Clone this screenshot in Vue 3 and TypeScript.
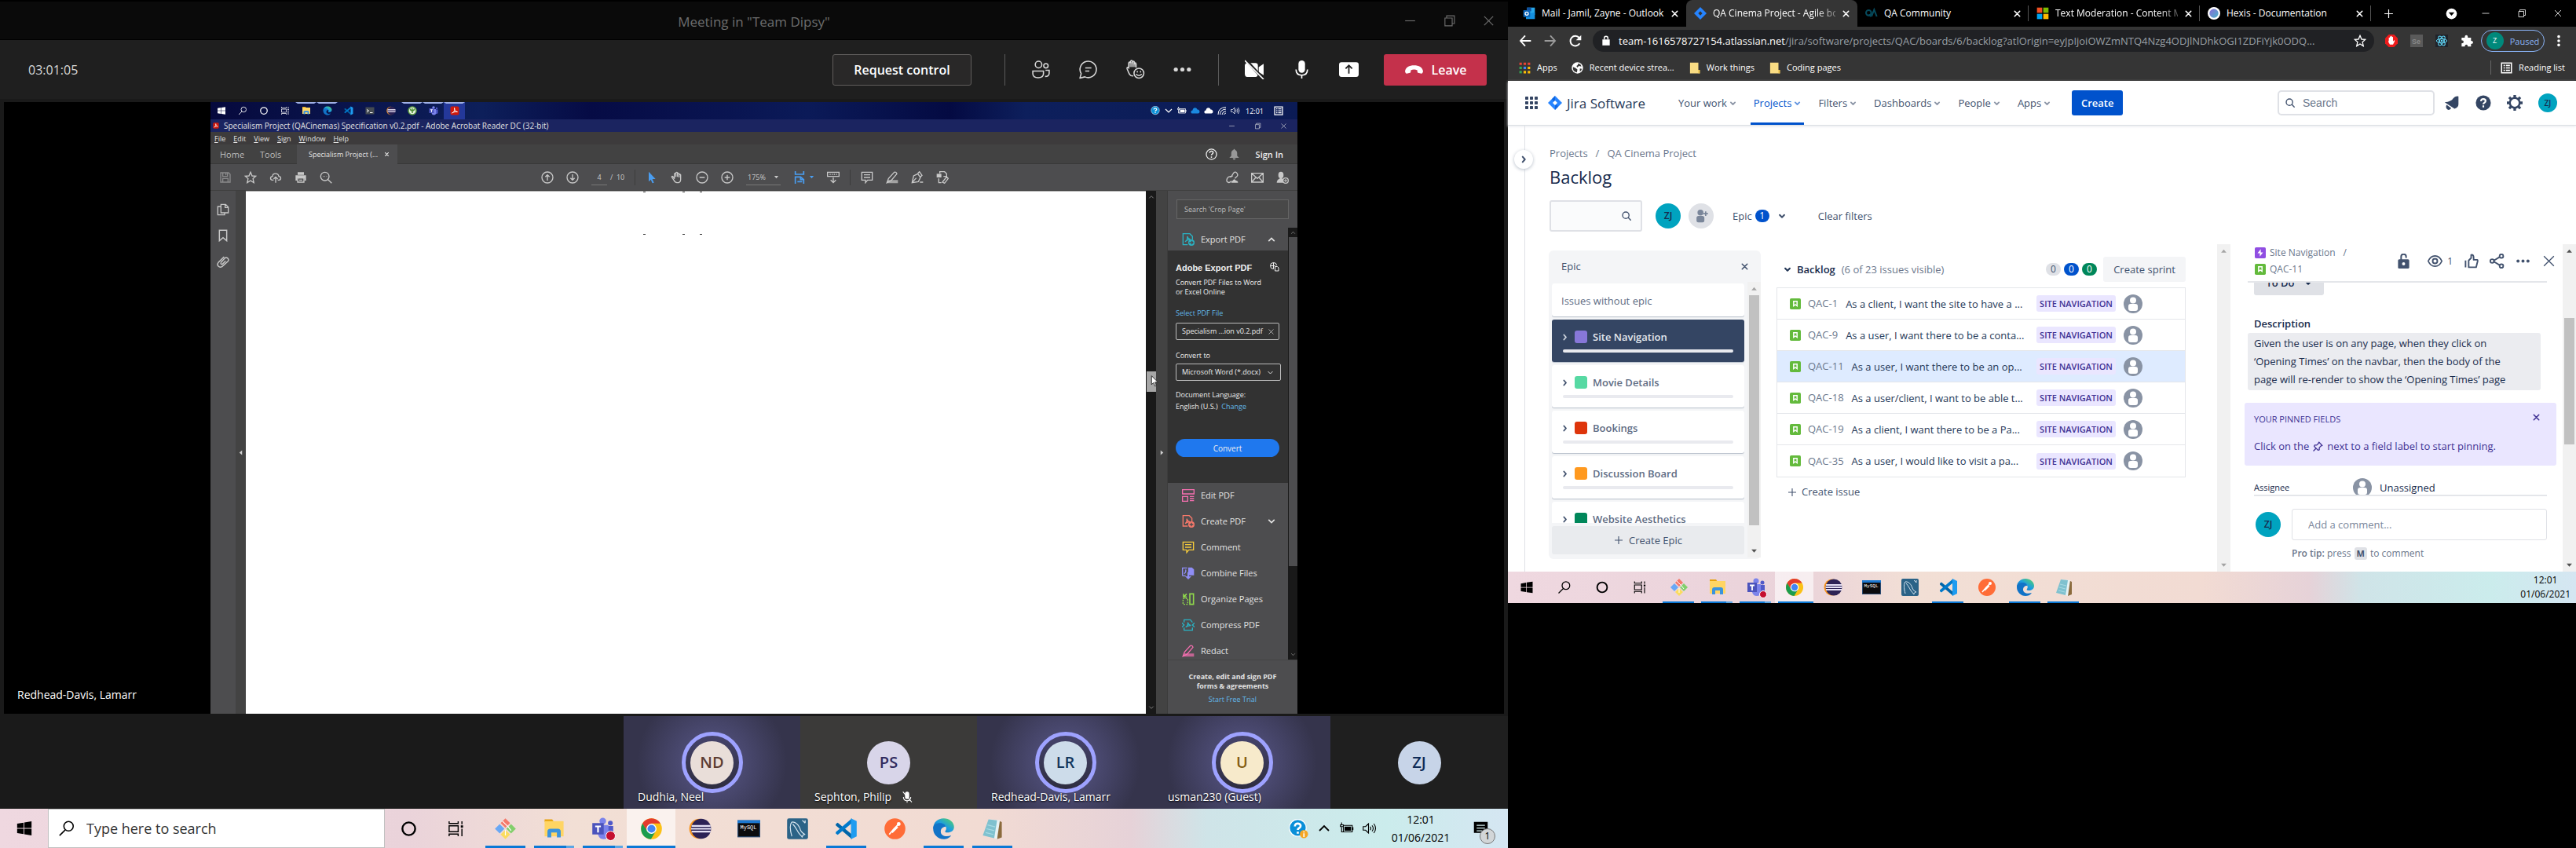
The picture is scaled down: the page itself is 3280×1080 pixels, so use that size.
<script setup lang="ts">
interface App { icon: string; running?: boolean; active?: boolean; stacked?: boolean }
interface Epic { name: string; color: string; selected?: boolean }
interface Issue { key: string; summary: string; selected?: boolean }

const apps: App[] = [
  { icon: 'git', running: true },
  { icon: 'explorer', running: true, stacked: true },
  { icon: 'teams', running: true, stacked: true },
  { icon: 'chrome', running: true, active: true },
  { icon: 'eclipse' },
  { icon: 'mysql' },
  { icon: 'workbench' },
  { icon: 'vscode', running: true },
  { icon: 'postman' },
  { icon: 'edge', running: true },
  { icon: 'notepad', running: true },
]

const sharedApps = ['start', 'search', 'cortana', 'taskview', 'explorer', 'edge', 'vscode', 'terminal', 'eclipse', 'spring', 'teams', 'acrobat']
const sharedOpen = ['explorer', 'edge', 'spring', 'teams', 'acrobat']
const menus = ['File', 'Edit', 'View', 'Sign', 'Window', 'Help']

const tools = [
  { name: 'Edit PDF', icon: 'editpdf', color: '#f56fb0' },
  { name: 'Create PDF', icon: 'createpdf', color: '#f8796b', more: true },
  { name: 'Comment', icon: 'note', color: '#f5cb3c' },
  { name: 'Combine Files', icon: 'combine', color: '#8f8df5' },
  { name: 'Organize Pages', icon: 'organize', color: '#90d94c' },
  { name: 'Compress PDF', icon: 'compress', color: '#2ab3c4' },
  { name: 'Redact', icon: 'marker', color: '#f56fb0' },
]

const people = [
  { initials: 'ND', name: 'Dudhia, Neel', bg: '#e9ded9', fg: '#5c3d33', live: true },
  { initials: 'PS', name: 'Sephton, Philip', bg: '#d8d5e9', fg: '#312b5e', muted: true },
  { initials: 'LR', name: 'Redhead-Davis, Lamarr', bg: '#cddcea', fg: '#12365c', live: true },
  { initials: 'U', name: 'usman230 (Guest)', bg: '#f7eacb', fg: '#835c12', live: true },
  { initials: 'ZJ', name: '', bg: '#c7d4e8', fg: '#0f2c57', self: true },
]

const tabs = [
  { title: 'Mail - Jamil, Zayne - Outlook', icon: 'outlook' },
  { title: 'QA Cinema Project - Agile bo', icon: 'jira', active: true, long: true },
  { title: 'QA Community', icon: 'qa' },
  { title: 'Text Moderation - Content M', icon: 'microsoft', long: true },
  { title: 'Hexis - Documentation', icon: 'hexis' },
]

const nav = ['Your work', 'Projects', 'Filters', 'Dashboards', 'People', 'Apps']

const epics: Epic[] = [
  { name: 'Site Navigation', color: '#8777d9', selected: true },
  { name: 'Movie Details', color: '#57d9a3' },
  { name: 'Bookings', color: '#de350b' },
  { name: 'Discussion Board', color: '#ff991f' },
  { name: 'Website Aesthetics', color: '#00875a' },
]

const issues: Issue[] = [
  { key: 'QAC-1', summary: 'As a client, I want the site to have a ...' },
  { key: 'QAC-9', summary: 'As a user, I want there to be a conta...' },
  { key: 'QAC-11', summary: 'As a user, I want there to be an op...', selected: true },
  { key: 'QAC-18', summary: 'As a user/client, I want to be able t...' },
  { key: 'QAC-19', summary: 'As a client, I want there to be a Pa...' },
  { key: 'QAC-35', summary: 'As a user, I would like to visit a pa...' },
]
</script>

<template>
  <svg class="sprite" aria-hidden="true">
    <defs>
      <linearGradient id="edgeg" x1="0" y1="1" x2="1" y2="0"><stop offset="0" stop-color="#0c59a4" /><stop offset=".5" stop-color="#1b9de2" /><stop offset="1" stop-color="#5bd75b" /></linearGradient>
      <linearGradient id="hexg" x1="0" y1="0" x2="1" y2="1"><stop offset="0" stop-color="#8a6bd8" /><stop offset="1" stop-color="#48b4c8" /></linearGradient>
    </defs>
    <symbol id="start" viewBox="0 0 24 24"><path fill="currentColor" d="M2 5.5 11 4v7.5H2zM12 3.8 22 2.3v9.2H12zM2 12.5h9V20l-9-1.5zM12 12.5h10v9.2l-10-1.5z" /></symbol>
    <symbol id="search" viewBox="0 0 24 24"><g fill="none" stroke="currentColor" stroke-width="1.7"><circle cx="14.5" cy="9" r="6.5" /><path d="M10 14 2 22" /></g></symbol>
    <symbol id="lens" viewBox="0 0 24 24"><g fill="none" stroke="currentColor" stroke-width="2.4" stroke-linecap="round"><circle cx="10.500" cy="10.500" r="7" /><path d="m16 16 5 5" /></g></symbol>
    <symbol id="cortana" viewBox="0 0 24 24"><circle cx="12" cy="12" r="8.500" fill="none" stroke="currentColor" stroke-width="2.500" /></symbol>
    <symbol id="taskview" viewBox="0 0 24 24"><g fill="none" stroke="currentColor" stroke-width="1.500"><path d="M3 2v3h12V2M3 22v-3h12v3M3 8h12v8H3zM20 2v4M20 12v10" /><path stroke-width="3" d="M20 7.500v3" /></g></symbol>
    <symbol id="git" viewBox="0 0 24 24"><path fill="#f4796b" d="m12 1 5 5-5 5-5-5z" /><path fill="#69a8f5" d="m6 7 5 5-5 5-5-5z" /><path fill="#82cf6b" d="m18 7 5 5-5 5-5-5z" /><path fill="#fbdc5f" d="m12 13 5 5-5 5-5-5z" /><path stroke="#fff" stroke-width="1" fill="none" d="m9 4 6 6M12 13v6M15 10l3 4" /></symbol>
    <symbol id="explorer" viewBox="0 0 24 24"><path fill="#e8a30e" d="M2 2h8l2 3H2z" /><path fill="#ffd563" d="M2 4h20v16H2z" /><path fill="#3b93dd" d="M5 21v-6q0-3 3-3h8q3 0 3 3v6h-4v-5H9v5z" /></symbol>
    <symbol id="teams" viewBox="0 0 24 24"><circle cx="12" cy="4" r="3.500" fill="#7b83eb" /><circle cx="20" cy="6" r="2.500" fill="#5059c9" /><path fill="#5059c9" d="M15 9h8v8q0 3-4 3h-4z" /><path fill="#7b83eb" d="M7 8h11v10q0 5-5 5t-6-5z" /><path fill="#4b53bc" d="M1 6h12v12H1z" /><path stroke="#fff" stroke-width="1.800" d="M4 9.500h6M7 9.500V16" /></symbol>
    <symbol id="chrome" viewBox="0 0 24 24"><circle cx="12" cy="12" r="11" fill="#fbc116" /><path fill="#e33b2e" d="M2.500 6.500A11 11 0 0 1 21.500 6.500H12L7 14z" /><path fill="#1a9c4f" d="M2.500 6.500A11 11 0 0 0 11.500 23l5-8.500-9 0z" /><circle cx="12" cy="12" r="5.300" fill="#fff" /><circle cx="12" cy="12" r="4.200" fill="#4285f4" /></symbol>
    <symbol id="eclipse" viewBox="0 0 24 24"><circle cx="11" cy="12" r="10.500" fill="#f7941e" /><circle cx="13" cy="12" r="10.500" fill="#2c2255" /><path stroke="#e5e1f5" stroke-width="1.800" d="M3 9h20M2.500 12h21M3 15h20" /></symbol>
    <symbol id="mysql" viewBox="0 0 24 24"><path fill="#2a4a70" d="M0 3h24v18H0z" /><path fill="#0b0b0d" d="M1 6h22v14H1z" /><path fill="#1c78d0" d="M0 3h24v3H0z" /></symbol>
    <symbol id="workbench" viewBox="0 0 24 24"><rect x="1" y="1" width="22" height="22" rx="2" fill="#2b6387" /><path fill="none" stroke="#d8e6f0" stroke-width="1" d="M6 20C4 13 4 7 6 5c4-1 8 4 9 8 1 3 3 4 5 5-2 0-3 1-3 3-1-2-3-3-4-5-2-3-3-6-6-9M17 3l3 3M20 3v3" /></symbol>
    <symbol id="vscode" viewBox="0 0 24 24"><path fill="#0065a9" d="m1 7 2-1.500L18 18v5L1 8.500z" /><path fill="#007acc" d="m1 17 2 1.500L18 6V1L1 15.500z" /><path fill="#1f9cf0" d="m17 1 6 3v16l-6 3z" /></symbol>
    <symbol id="postman" viewBox="0 0 24 24"><circle cx="12" cy="12" r="11" fill="#ff6c37" /><path fill="none" stroke="#fff" stroke-width="1.500" d="M6 18l5-6 4-4M9 16l6-6" /><circle cx="16" cy="7" r="2" fill="#fff" /></symbol>
    <symbol id="edge" viewBox="0 0 24 24"><path fill="url(#edgeg)" d="M1 12C1 5 6 1 12 1s11 4 11 9c0 4-3 6-7 6-2 0-3-1-2-2 2-3 0-6-4-6-5 0-9 4-9 4z" /><path fill="#1173c7" d="M1 12c0-4 4-6 7-6 4 0 6 2 6 4-3 0-5 2-5 5 0 4 5 6 11 4-2 3-5 4-8 4C6 23 1 18 1 12z" /></symbol>
    <symbol id="notepad" viewBox="0 0 24 24"><path fill="#8a6a3c" d="m18 3 4 2v16l-5 2z" /><path fill="#e7f2f4" d="m8 2 12 1-3 20-3-1z" /><path fill="#7fc1cf" d="M8 2 17 3l-3 19-12-3z" /><path stroke="#a8dbe4" stroke-width="1" d="m7 8 8 2M6 12l8 2M5 16l8 2" /></symbol>
    <symbol id="terminal" viewBox="0 0 24 24"><path fill="#444b52" d="M1 3h22v18H1z" /><path fill="none" stroke="#fff" stroke-width="2" d="m4 9 5 3-5 4M12 17h7" /></symbol>
    <symbol id="spring" viewBox="0 0 24 24"><circle cx="12" cy="12" r="10" fill="#e6f2df" stroke="#5d9c45" stroke-width="3" /><path fill="none" stroke="#4c8c33" stroke-width="3" d="M12 6v12M7 7c0 4 2 5 5 5s5-1 5-5" /></symbol>
    <symbol id="acrobat" viewBox="0 0 24 24"><rect x="1" y="1" width="22" height="22" rx="4" fill="#d0190b" /><path fill="none" stroke="#fff" stroke-width="2" d="M5 18c5-2 8-8 6-13 0 6 3 9 8 10-5-1-9 0-14 3z" /></symbol>
    <symbol id="min" viewBox="0 0 24 24"><path stroke="currentColor" stroke-width="1.600" d="M3 12h18" /></symbol>
    <symbol id="restore" viewBox="0 0 24 24"><path fill="none" stroke="currentColor" stroke-width="1.600" d="M4 7h13v14H4zM7 7V3h14v14h-4" /></symbol>
    <symbol id="close" viewBox="0 0 24 24"><path stroke="currentColor" stroke-width="1.700" d="m4 4 16 16M20 4 4 20" /></symbol>
    <symbol id="cross" viewBox="0 0 24 24"><path stroke="currentColor" stroke-width="3.500" stroke-linecap="round" d="m5 5 14 14M19 5 5 19" /></symbol>
    <symbol id="people" viewBox="0 0 24 24"><g fill="none" stroke="currentColor" stroke-width="1.500"><circle cx="9" cy="6" r="4" /><circle cx="18" cy="7.500" r="2.700" /><path d="M2 14h13v3q0 5-6.500 5T2 17zM17.500 13H22v3.500q0 4-5 4" /></g></symbol>
    <symbol id="chat" viewBox="0 0 24 24"><path fill="none" stroke="currentColor" stroke-width="1.500" stroke-linejoin="round" d="M2 22.500 3.500 17A10 10 0 1 1 8 21zM8.500 10h7.500M8.500 14h5" /></symbol>
    <symbol id="hand" viewBox="0 0 24 24"><g fill="none" stroke="currentColor" stroke-width="1.500" stroke-linecap="round"><path d="M9 20c-4 0-5-4-7-9-.5-2 1-2 2-1V4q1.200-2 2.300 0V2q1.200-2 2.300 0v1q1.200-2 2.400 0v2q1.300-1 2 0v4" /><circle cx="16.500" cy="16.500" r="6" /><path d="M13.500 18q3 3 6 0M14.500 14.500v.5M18.500 14.500v.5" /></g><path fill="currentColor" opacity=".65" d="M5 3h8v6H5z" /></symbol>
    <symbol id="dots" viewBox="0 0 24 24"><g fill="currentColor"><circle cx="4" cy="12" r="2.500" /><circle cx="12" cy="12" r="2.500" /><circle cx="20" cy="12" r="2.500" /></g></symbol>
    <symbol id="camoff" viewBox="0 0 24 24"><path fill="currentColor" d="M4 4h9q3 0 3 3v10q0 4-3 4H3q-3 0-3-4V7q0-2 2-3zM17 9l6-4v14l-6-4z" /><path stroke="#1f1f1f" stroke-width="3.500" d="m1 0 22 24" /><path stroke="currentColor" stroke-width="1.600" d="m0 1 23 23" /></symbol>
    <symbol id="mic" viewBox="0 0 24 24"><rect x="8" y="1" width="8" height="15" rx="4" fill="currentColor" /><path fill="none" stroke="currentColor" stroke-width="1.600" d="M5 12q0 7 7 7t7-7M12 19v4" /></symbol>
    <symbol id="micoff" viewBox="0 0 24 24"><rect x="8" y="2" width="8" height="14" rx="4" fill="currentColor" /><path fill="none" stroke="currentColor" stroke-width="1.600" d="M5 12q0 7 7 7t7-7M12 19v4M4 2l17 20" /></symbol>
    <symbol id="share" viewBox="0 0 24 24"><rect x="0" y="3" width="24" height="18" rx="3" fill="currentColor" /><path fill="none" stroke="#1f1f1f" stroke-width="1.700" d="M12 17V7M8 11l4-4 4 4" /></symbol>
    <symbol id="hang" viewBox="0 0 24 12"><path fill="currentColor" d="M1 8C2 3 6 1 12 1s10 2 11 7c0 2-1 3-2 3l-4-1c-1 0-1-1-1-3q-4-2-8 0c0 2 0 3-1 3l-4 1c-1 0-2-1-2-3z" /></symbol>
    <symbol id="up" viewBox="0 0 24 24"><path fill="none" stroke="currentColor" stroke-width="2.400" d="m4 16 8-8 8 8" /></symbol>
    <symbol id="down" viewBox="0 0 24 24"><path fill="none" stroke="currentColor" stroke-width="2.400" d="m4 8 8 8 8-8" /></symbol>
    <symbol id="upbold" viewBox="0 0 24 24"><path fill="none" stroke="currentColor" stroke-width="4" d="m3 17 9-9 9 9" /></symbol>
    <symbol id="downbold" viewBox="0 0 24 24"><path fill="none" stroke="currentColor" stroke-width="4" d="m3 7 9 9 9-9" /></symbol>
    <symbol id="chev" viewBox="0 0 24 24"><path fill="none" stroke="currentColor" stroke-width="5" stroke-linecap="round" stroke-linejoin="round" d="m5 9 7 7 7-7" /></symbol>
    <symbol id="chevr" viewBox="0 0 24 24"><path fill="none" stroke="currentColor" stroke-width="5" stroke-linecap="round" stroke-linejoin="round" d="m9 4 7 8-7 8" /></symbol>
    <symbol id="tri" viewBox="0 0 24 24"><path fill="currentColor" d="M3 7h18l-9 11z" /></symbol>
    <symbol id="triup" viewBox="0 0 24 24"><path fill="currentColor" d="M3 18h18L12 7z" /></symbol>
    <symbol id="trir" viewBox="0 0 24 24"><path fill="currentColor" d="M6 2v20l12-10z" /></symbol>
    <symbol id="tril" viewBox="0 0 24 24"><path fill="currentColor" d="M18 2v20L6 12z" /></symbol>
    <symbol id="save" viewBox="0 0 24 24"><path fill="none" stroke="currentColor" stroke-width="2" d="M3 3h15l3 3v15H3zM7 3v7h9V3M7 21v-7h10v7M13 4v4" /></symbol>
    <symbol id="star" viewBox="0 0 24 24"><path fill="none" stroke="currentColor" stroke-width="2" d="m12 2 3 7 7 .6-5.300 4.700L18.300 22 12 18l-6.300 4 1.600-7.700L2 9.600 9 9z" /></symbol>
    <symbol id="cloud" viewBox="0 0 24 24"><path fill="none" stroke="currentColor" stroke-width="2" d="M8 17H6c-5 0-5-7 0-7 0-7 11-7 12 0 5 0 5 7 0 7h-2M12 22V11M8 15l4-4 4 4" /></symbol>
    <symbol id="print" viewBox="0 0 24 24"><path fill="currentColor" d="M6 2h12v5H6zM2 8h20v10h-3v-4H5v4H2z" /><path fill="none" stroke="currentColor" stroke-width="2" d="M6 13h12v8H6zM9 17h6" /></symbol>
    <symbol id="find" viewBox="0 0 24 24"><path fill="none" stroke="currentColor" stroke-width="2" d="M10 2a8 8 0 1 0 0 16 8 8 0 0 0 0-16zM16 16l7 7M6 10h1M9.500 10h1M13 10h1" /></symbol>
    <symbol id="circup" viewBox="0 0 24 24"><path fill="none" stroke="currentColor" stroke-width="2" d="M12 1.500a10.500 10.500 0 1 0 0 21 10.500 10.500 0 0 0 0-21zM12 18V7M8 11l4-4 4 4" /></symbol>
    <symbol id="circdown" viewBox="0 0 24 24"><path fill="none" stroke="currentColor" stroke-width="2" d="M12 1.500a10.500 10.500 0 1 0 0 21 10.500 10.500 0 0 0 0-21zM12 6v11M8 13l4 4 4-4" /></symbol>
    <symbol id="zoomout" viewBox="0 0 24 24"><path fill="none" stroke="currentColor" stroke-width="2" d="M12 1.500a10.500 10.500 0 1 0 0 21 10.500 10.500 0 0 0 0-21zM7 12h10" /></symbol>
    <symbol id="zoomin" viewBox="0 0 24 24"><path fill="none" stroke="currentColor" stroke-width="2" d="M12 1.500a10.500 10.500 0 1 0 0 21 10.500 10.500 0 0 0 0-21zM7 12h10M12 7v10" /></symbol>
    <symbol id="pointer" viewBox="0 0 24 24"><path fill="currentColor" d="M6 1v19l4-4 3 7 3-1-3-7h6z" /></symbol>
    <symbol id="grab" viewBox="0 0 24 24"><path fill="none" stroke="currentColor" stroke-width="2" stroke-linejoin="round" d="M7 14V5q1.500-2 3 0V3q1.500-2 3 0v2q1.500-2 3 0v2q1.500-2 3 0v9q0 6-7 6-4 0-6-5l-4-6q0-2 2-1zM10 5v6M13 5v6M16 6v6" /></symbol>
    <symbol id="fit" viewBox="0 0 24 24"><path fill="none" stroke="currentColor" stroke-width="2.500" d="M4 0v6h16V0M4 24V11h10l6 5v8M14 11v5h6M8 20h9" /></symbol>
    <symbol id="scrollmode" viewBox="0 0 24 24"><path fill="none" stroke="currentColor" stroke-width="2" d="M1 2h22v8H1zM5 6h2M9 6h2M13 6h2M17 6h2M12 12v10M7 17l5 5 5-5" /></symbol>
    <symbol id="note" viewBox="0 0 24 24"><path fill="none" stroke="currentColor" stroke-width="2" d="M2 2h20v15H13l-4 5v-5H2zM6 7h12M6 12h12" /></symbol>
    <symbol id="marker" viewBox="0 0 24 24"><path fill="currentColor" d="M1 23 4 17h19v6z" opacity=".7" /><path fill="none" stroke="currentColor" stroke-width="2" d="M2 22 5 14 16 2q4-1 5 3L10 18z" /></symbol>
    <symbol id="sign" viewBox="0 0 24 24"><path fill="none" stroke="currentColor" stroke-width="2" d="M2 22 5 9l8-4 5 7-4 8zM13 4l3-3 5 7-3 3M2 22l8-9M17 21h6" /></symbol>
    <symbol id="more" viewBox="0 0 24 24"><path fill="currentColor" d="M1 5h9v7H1z" /><path fill="none" stroke="currentColor" stroke-width="2" d="M7 4V1h9l4 4v5h-6M5 14v8h5M12 21l8-10 3 3-7 9z" /></symbol>
    <symbol id="link" viewBox="0 0 24 24"><path fill="none" stroke="currentColor" stroke-width="2" d="M9 12 15 3q3-3 6 1t-1 7l-3 3M13 9l-8 2q-5 4-3 9 4 4 8-1" /><path fill="currentColor" d="M10 22q0-4 3-4 3-5 6 0 4 0 4 4z" /></symbol>
    <symbol id="mail" viewBox="0 0 24 24"><path fill="none" stroke="currentColor" stroke-width="2" d="M1 4h22v17H1zM1 4l11 10L23 4M1 21l8-9M23 21l-8-9" /></symbol>
    <symbol id="adduser" viewBox="0 0 24 24"><path fill="currentColor" d="M9 1q5 0 5 6t-3 6v1l4 2v6H1q0-5 6-8v-1Q4 13 4 7t5-6z" /><circle cx="18" cy="18" r="5" fill="#4d4d4f" stroke="currentColor" stroke-width="2" /><path stroke="currentColor" stroke-width="1.500" d="M15 18h6M18 15v6" /></symbol>
    <symbol id="help" viewBox="0 0 24 24"><circle cx="12" cy="12" r="10.500" fill="none" stroke="currentColor" stroke-width="2" /><path fill="none" stroke="currentColor" stroke-width="2.400" d="M8.500 9c0-5 7-4 7-.5 0 3-3.500 2.500-3.500 5.500M12 16.500V19" /></symbol>
    <symbol id="helpfill" viewBox="0 0 24 24"><circle cx="12" cy="12" r="11.500" fill="currentColor" /><path fill="none" stroke="#fff" stroke-width="2.600" d="M8.500 9.500c0-5 7-4 7-.5 0 3-3.500 2.500-3.500 5M12 16v3" /></symbol>
    <symbol id="bell" viewBox="0 0 24 24"><path fill="currentColor" d="M12 1q1.500 0 1.500 2Q18 4 18 10v5l4 4H2l4-4v-5q0-6 4.500-7 0-2 1.500-2zM9 20h6q0 3-3 3t-3-3z" /></symbol>
    <symbol id="pages" viewBox="0 0 24 24"><path fill="none" stroke="currentColor" stroke-width="2" d="M8 2h9l5 5v11H8zM16 2v6h6M8 6H2v16h13v-4" /></symbol>
    <symbol id="bookmark" viewBox="0 0 24 24"><path fill="none" stroke="currentColor" stroke-width="2.200" d="M5 2h14v20l-7-6-7 6z" /></symbol>
    <symbol id="clip" viewBox="0 0 24 24"><path fill="none" stroke="currentColor" stroke-width="2.200" d="m8 14 7-8q3-3 6 0t0 6L10 22q-4 2-7-1t0-7L14 3M8 14q-1 4 3 3l6-6" /></symbol>
    <symbol id="export" viewBox="0 0 24 24"><path fill="none" stroke="currentColor" stroke-width="2" d="M11 22H2V1h13l5 5v6M6 16c4-2 5-5 4-10 1 4 3 5 6 6-4 0-7 1-10 4z" /><circle cx="18" cy="18" r="6" fill="currentColor" /><path fill="none" stroke="#4d4d4f" stroke-width="2" d="M14 18h7M18 15l3 3-3 3" /></symbol>
    <symbol id="createpdf" viewBox="0 0 24 24"><path fill="none" stroke="currentColor" stroke-width="2" d="M11 21H2V1h12l5 5v6M6 16c4-2 4-5 3-9 1 3 3 5 6 6-4 0-6 1-9 3z" /><circle cx="18" cy="18" r="6" fill="currentColor" /><path fill="none" stroke="#4d4d4f" stroke-width="2" d="M14.500 18h7M18 14.500v7" /></symbol>
    <symbol id="editpdf" viewBox="0 0 24 24"><path fill="none" stroke="currentColor" stroke-width="2" d="M1 1h22v8H1zM1 14h10v9H1zM15 14h8M15 18h8M15 22h8" /></symbol>
    <symbol id="combine" viewBox="0 0 24 24"><path fill="currentColor" d="M12 1h7l4 4v11H12z" /><path fill="none" stroke="currentColor" stroke-width="2" d="M1 17V2h9M4 13c3-2 4-4 3-8M1 17h6" /><path stroke="currentColor" stroke-width="3" d="M12 10v10" /><path fill="currentColor" d="M6 18h12l-6 6z" /></symbol>
    <symbol id="organize" viewBox="0 0 24 24"><path fill="none" stroke="currentColor" stroke-width="2.400" d="M15 2h7v20h-7z" /><path fill="none" stroke="currentColor" stroke-width="2" stroke-dasharray="3 2" d="M2 11h9v11H2z" /><path fill="none" stroke="currentColor" stroke-width="2.400" d="M3 2v6h6M3 8l6-6" /></symbol>
    <symbol id="compress" viewBox="0 0 24 24"><path fill="none" stroke="currentColor" stroke-width="2" d="M4 7V2h12l4 5M4 17v5h16v-5M0 8l4 4-4 4M24 8l-4 4 4 4M7 16c4-2 5-4 4-9 1 3 3 5 6 6-4 0-7 1-10 3z" /></symbol>
    <symbol id="globe" viewBox="0 0 24 24"><path fill="none" stroke="currentColor" stroke-width="2" d="M9 1a8 8 0 1 0 0 16M9 1v16M1 9h12M9 1q8 0 8 7M13 11h6l3 3v8h-9z" /></symbol>
    <symbol id="badgehelp" viewBox="0 0 24 24"><circle cx="12" cy="11" r="10.500" fill="#0a8fd8" stroke="#fff" stroke-width="1" /><path fill="none" stroke="#fff" stroke-width="2.600" d="M8.500 9c0-5 7-4 7-.5 0 3-3.500 2.500-3.500 5M12 15.500V18" /></symbol>
    <symbol id="helpinfo" viewBox="0 0 24 24"><circle cx="11" cy="11" r="10.300" fill="#0a8fd8" stroke="#fff" stroke-width="1.200" /><path fill="none" stroke="#fff" stroke-width="2.600" d="M7.500 9c0-5 7-4 7-.5 0 3-3.500 2.500-3.500 5M11 15.500V18" /><circle cx="18.500" cy="18.500" r="5" fill="#f5a623" /><path stroke="#fff" stroke-width="1.600" d="M18.500 15v1.500M18.500 17.500V22" /></symbol>
    <symbol id="battery" viewBox="0 0 24 24"><path fill="none" stroke="currentColor" stroke-width="1.500" d="M6 7h15v11H6zM3 2v4M1 6h5v3H1zM3 10v8h3" /><path fill="currentColor" d="M8 9h11v7H8zM21 10h2v5h-2z" /></symbol>
    <symbol id="sound" viewBox="0 0 24 24"><path fill="none" stroke="currentColor" stroke-width="1.500" d="M1 9h4l5-5v16l-5-5H1zM13 9q2 3 0 6M16 7q4 5 0 10M19 4q6 8 0 16" /></symbol>
    <symbol id="wifi" viewBox="0 0 24 24"><path fill="none" stroke="currentColor" stroke-width="2" d="M2 22Q2 4 22 3M7 22Q7 9 22 8M12 22q1-8 10-9M17 22q1-3 5-4" /></symbol>
    <symbol id="onedrive" viewBox="0 0 24 24"><path fill="currentColor" d="M5 19c-6 0-5-8 0-8C6 3 15 3 17 9c7-1 8 10 2 10z" /></symbol>
    <symbol id="notif" viewBox="0 0 24 24"><path fill="currentColor" d="M2 2h20v16h-5v5l-5-5H2z" /><path stroke="#d4edee" stroke-width="1.700" d="M6 7h12M6 11h12M6 15h8" /></symbol>
    <symbol id="outlook" viewBox="0 0 24 24"><path fill="#28a8ea" d="M8 1h15v14H8z" /><path fill="#0f4f9e" d="M8 1h8v7H8z" /><path fill="#1490df" d="M6 13l17-3v13H6z" /><path fill="#0a64b8" d="M1 6h13v13H1z" /><circle cx="7.500" cy="12.500" r="3" fill="none" stroke="#fff" stroke-width="2" /></symbol>
    <symbol id="jira" viewBox="0 0 24 24"><path fill="#2684ff" d="m12 0 12 12-12 12L0 12z" /><path fill="#0052cc" d="m12 0-5 5q0 3 5 5zM12 24l5-5q0-3-5-5z" opacity=".6" /><path fill="#fff" d="m12 8 4 4-4 4-4-4z" /></symbol>
    <symbol id="jiratab" viewBox="0 0 24 24"><path fill="#2684ff" d="m12 0 12 12-12 12L0 12z" /><path fill="#353535" d="m12 8 4 4-4 4-4-4z" /></symbol>
    <symbol id="qa" viewBox="0 0 24 24"><g fill="none" stroke="#064a5c" stroke-width="3"><circle cx="6.500" cy="11" r="5" /><path d="m7 14 4 4M12 18l5-13 5 13" /></g></symbol>
    <symbol id="microsoft" viewBox="0 0 24 24"><path fill="#f25022" d="M1 1h10v10H1z" /><path fill="#7fba00" d="M13 1h10v10H13z" /><path fill="#00a4ef" d="M1 13h10v10H1z" /><path fill="#ffb900" d="M13 13h10v10H13z" /></symbol>
    <symbol id="hexis" viewBox="0 0 24 24"><circle cx="12" cy="12" r="12" fill="#fff" /><circle cx="12" cy="12" r="8.500" fill="url(#hexg)" /></symbol>
    <symbol id="plus" viewBox="0 0 24 24"><path stroke="currentColor" stroke-width="2.200" d="M12 2v20M2 12h20" /></symbol>
    <symbol id="media" viewBox="0 0 24 24"><circle cx="12" cy="12" r="11" fill="currentColor" /><path fill="#000" d="M6 9h12l-6 7z" /></symbol>
    <symbol id="back" viewBox="0 0 24 24"><path fill="none" stroke="currentColor" stroke-width="2.800" d="M23 12H3M12 2 3 12l9 10" /></symbol>
    <symbol id="fwd" viewBox="0 0 24 24"><path fill="none" stroke="currentColor" stroke-width="2.800" d="M1 12h20M12 2l9 10-9 10" /></symbol>
    <symbol id="reload" viewBox="0 0 24 24"><path fill="none" stroke="currentColor" stroke-width="3" d="M20 17A9.500 9.500 0 1 1 19 6" /><path fill="currentColor" d="M23 1v10H13z" /></symbol>
    <symbol id="lock" viewBox="0 0 24 24"><path fill="currentColor" d="M4 9h16v13H4z" /><path fill="none" stroke="currentColor" stroke-width="2.500" d="M8 9V6q0-4 4-4t4 4v3" /></symbol>
    <symbol id="unlock" viewBox="0 0 24 24"><rect x="3" y="9" width="18" height="15" rx="2" fill="currentColor" /><path fill="none" stroke="currentColor" stroke-width="2.500" d="M8 10V5q0-4 4-4t4 4v2" /><circle cx="12" cy="16.500" r="2.500" fill="#fff" /></symbol>
    <symbol id="adblock" viewBox="0 0 24 24"><path fill="#ed1c1c" d="M7 0h10l7 7v10l-7 7H7l-7-7V7z" /><path fill="#fff" d="M7 11V6q1-1 2 0v4-6q1-1 2 0v6-7q1-1 2 0v8-6q1-1 2 0v8l2-2q2 0 1 2l-3 6H9l-3-5z" /></symbol>
    <symbol id="react" viewBox="0 0 24 24"><path fill="#20232a" d="M0 0h24v24H0z" /><g fill="none" stroke="#61dafb" stroke-width="1.500"><ellipse cx="12" cy="12" rx="10" ry="4" /><ellipse cx="12" cy="12" rx="10" ry="4" transform="rotate(60 12 12)" /><ellipse cx="12" cy="12" rx="10" ry="4" transform="rotate(120 12 12)" /></g><circle cx="12" cy="12" r="2" fill="#61dafb" /></symbol>
    <symbol id="puzzle" viewBox="0 0 24 24"><path fill="currentColor" d="M2 6h6q0-5 3-5t3 5h6v6q4 0 4 3t-4 3v5h-6q0-4-3-4t-3 4H2v-6q4 0 4-3t-4-3z" /></symbol>
    <symbol id="vdots" viewBox="0 0 24 24"><g fill="currentColor"><circle cx="12" cy="4" r="2.700" /><circle cx="12" cy="12" r="2.700" /><circle cx="12" cy="20" r="2.700" /></g></symbol>
    <symbol id="appsgrid" viewBox="0 0 24 24"><path fill="#e94335" d="M1 1h5v5H1zM9.500 1h5v5h-5zM18 1h5v5h-5z" /><path fill="#34a853" d="M1 9.500h5v5H1z" /><path fill="#4285f4" d="M9.500 9.500h5v5h-5z" /><path fill="#fbbc05" d="M18 9.500h5v5h-5z" /><path fill="#34a853" d="M1 18h5v5H1z" /><path fill="#fbbc05" d="M9.500 18h5v5h-5zM18 18h5v5h-5z" /></symbol>
    <symbol id="world" viewBox="0 0 24 24"><circle cx="12" cy="12" r="11.500" fill="#fff" /><path fill="#353535" d="M13 3q6 0 7 6l-5-1-3 3-2-3 3-2zM3 10l5 2 4 3-1 6Q4 20 3 14zM17 13l4 1q-1 4-4 5z" /></symbol>
    <symbol id="folder" viewBox="0 0 24 24"><path fill="#f9dc83" d="M3 1h17v15h3v7H3z" /><path fill="#e8bf45" d="M20 16h3v7h-3z" /></symbol>
    <symbol id="reading" viewBox="0 0 24 24"><path fill="none" stroke="currentColor" stroke-width="2.500" d="M2 2h20v20H2z" /><path stroke="currentColor" stroke-width="2.500" d="M6 7h3M11 7h8M6 12h3M11 12h8M6 17h3M11 17h8" /></symbol>
    <symbol id="ninegrid" viewBox="0 0 24 24"><g fill="currentColor"><rect width="6" height="6" rx="1" /><rect x="9" width="6" height="6" rx="1" /><rect x="18" width="6" height="6" rx="1" /><rect y="9" width="6" height="6" rx="1" /><rect x="9" y="9" width="6" height="6" rx="1" /><rect x="18" y="9" width="6" height="6" rx="1" /><rect y="18" width="6" height="6" rx="1" /><rect x="9" y="18" width="6" height="6" rx="1" /><rect x="18" y="18" width="6" height="6" rx="1" /></g></symbol>
    <symbol id="news" viewBox="0 0 24 24"><path fill="currentColor" d="M22 2v12q0 5-6 7L1 11q10-1 13-6 3-4 8-3zM4 15l7 5q-4 5-7 1-2-3 0-6z" /></symbol>
    <symbol id="gear" viewBox="0 0 24 24"><circle cx="12" cy="12" r="7.500" fill="none" stroke="currentColor" stroke-width="3" /><path stroke="currentColor" stroke-width="4" d="M12 0v4M12 20v4M0 12h4M20 12h4M3.500 3.500l3 3M17.500 17.500l3 3M3.500 20.500l3-3M17.500 6.500l3-3" /></symbol>
    <symbol id="person" viewBox="0 0 24 24"><circle cx="12" cy="12" r="12" fill="#8993a4" /><circle cx="12" cy="7.500" r="4" fill="#fff" /><rect x="6" y="12" width="12" height="9" rx="3" fill="#fff" /></symbol>
    <symbol id="addperson" viewBox="0 0 24 24"><circle cx="11" cy="7" r="4.500" fill="currentColor" /><rect x="5" y="12" width="12" height="10" rx="3" fill="currentColor" /><path stroke="currentColor" stroke-width="2" d="M19 5v7M15.500 8.500h7" /></symbol>
    <symbol id="story" viewBox="0 0 24 24"><rect width="24" height="24" rx="3" fill="#63ba3c" /><path fill="#fff" d="M7 5h10v14l-5-4-5 4z" /><path fill="#63ba3c" d="M9.500 7.500h5V14L12 12l-2.500 2z" /></symbol>
    <symbol id="epic" viewBox="0 0 24 24"><rect width="24" height="24" rx="3" fill="#904ee2" /><path fill="#fff" d="m13 4-7 9h5v7l7-9h-5z" /></symbol>
    <symbol id="eye" viewBox="0 0 24 24"><path fill="none" stroke="currentColor" stroke-width="2.200" d="M1 12q4-8.500 11-8.500T23 12q-4 8.500-11 8.500T1 12z" /><circle cx="12" cy="12" r="3.800" fill="none" stroke="currentColor" stroke-width="2.400" /></symbol>
    <symbol id="thumb" viewBox="0 0 24 24"><path fill="none" stroke="currentColor" stroke-width="2.400" stroke-linejoin="round" d="M8 21V11l4-4V2q4-1 4 5v3h6q1 1 0 4l-2 8H8zM3 11v11" /></symbol>
    <symbol id="nodes" viewBox="0 0 24 24"><g fill="none" stroke="currentColor" stroke-width="2.400"><circle cx="4" cy="12" r="3" /><circle cx="19" cy="4" r="3" /><circle cx="19" cy="20" r="3" /><path d="m7 11 9-5.500M7 13l9 5.500" /></g></symbol>
    <symbol id="pin" viewBox="0 0 24 24"><path fill="none" stroke="currentColor" stroke-width="2.400" stroke-linejoin="round" d="m14 2 8 8-3 1-4 4v5l-3 1-9-9 1-3h5l4-4zM7 17l-6 6" /></symbol>
    <symbol id="cursor" viewBox="0 0 16 24"><path fill="#fff" stroke="#222" stroke-width="1.500" d="M2 1v18l4-4 3 7 3-1-3-7h6z" /></symbol>
  </svg>

  <div class="desktop">
    <!-- Primary monitor: Teams call -->
    <section class="primary">
      <header class="titlebar">
        <h1 class="title">Meeting in "Team Dipsy"</h1>
        <div class="winbtns">
          <button aria-label="Minimize"><svg><use href="#min" /></svg></button>
          <button aria-label="Restore"><svg><use href="#restore" /></svg></button>
          <button aria-label="Close"><svg><use href="#close" /></svg></button>
        </div>
      </header>
      <div class="callbar">
        <time class="timer">03:01:05</time>
        <button class="request">Request control</button>
        <div class="group">
          <button aria-label="People"><svg><use href="#people" /></svg></button>
          <button aria-label="Chat"><svg><use href="#chat" /></svg></button>
          <button aria-label="Reactions"><svg><use href="#hand" /></svg></button>
          <button aria-label="More"><svg><use href="#dots" /></svg></button>
        </div>
        <div class="group devices">
          <button aria-label="Camera"><svg><use href="#camoff" /></svg></button>
          <button aria-label="Microphone"><svg><use href="#mic" /></svg></button>
          <button aria-label="Share"><svg><use href="#share" /></svg></button>
        </div>
        <button class="leave"><svg><use href="#hang" /></svg>Leave</button>
      </div>

      <div class="stage">
        <div class="shared">
          <div class="s-taskbar">
            <span v-for="a in sharedApps" :key="a" class="s-app" :class="{ open: sharedOpen.includes(a), front: a === 'acrobat' }"><svg><use :href="'#' + a" /></svg></span>
            <div class="s-tray">
              <svg><use href="#badgehelp" /></svg><svg><use href="#down" /></svg><svg><use href="#battery" /></svg>
              <svg class="blue"><use href="#onedrive" /></svg><svg><use href="#onedrive" /></svg><svg><use href="#wifi" /></svg><svg><use href="#sound" /></svg>
              <span class="s-time">12:01</span>
              <svg><use href="#reading" /></svg>
            </div>
          </div>
          <div class="s-title">
            <svg><use href="#acrobat" /></svg>
            <span>Specialism Project (QACinemas) Specification v0.2.pdf - Adobe Acrobat Reader DC (32-bit)</span>
            <div class="s-win"><svg><use href="#min" /></svg><svg><use href="#restore" /></svg><svg><use href="#close" /></svg></div>
          </div>
          <nav class="s-menu"><span v-for="m in menus" :key="m"><u>{{ m[0] }}</u>{{ m.slice(1) }}</span></nav>
          <div class="s-tabs">
            <span class="s-home">Home</span><span class="s-tools">Tools</span>
            <div class="s-tab">Specialism Project (... <svg><use href="#cross" /></svg></div>
            <div class="s-account"><svg><use href="#help" /></svg><svg class="dim"><use href="#bell" /></svg><b>Sign In</b></div>
          </div>
          <div class="s-toolbar">
            <svg class="dim"><use href="#save" /></svg><svg><use href="#star" /></svg><svg><use href="#cloud" /></svg><svg><use href="#print" /></svg><svg><use href="#find" /></svg>
            <div class="s-mid">
              <svg><use href="#circup" /></svg><svg><use href="#circdown" /></svg>
              <span class="s-field page">4</span><span class="of">/&nbsp; 10</span><i class="bar"></i>
              <svg class="hot"><use href="#pointer" /></svg><svg><use href="#grab" /></svg><svg><use href="#zoomout" /></svg><svg><use href="#zoomin" /></svg>
              <span class="s-field zoom">175%<svg class="xs"><use href="#tri" /></svg></span>
              <span class="fit hot"><svg><use href="#fit" /></svg><svg class="xs"><use href="#tri" /></svg></span>
              <svg><use href="#scrollmode" /></svg><i class="bar"></i>
              <svg><use href="#note" /></svg><svg><use href="#marker" /></svg><svg><use href="#sign" /></svg><svg><use href="#more" /></svg>
            </div>
            <div class="s-end"><svg><use href="#link" /></svg><svg><use href="#mail" /></svg><svg><use href="#adduser" /></svg></div>
          </div>
          <div class="s-body">
            <aside class="s-rail"><svg><use href="#pages" /></svg><svg><use href="#bookmark" /></svg><svg><use href="#clip" /></svg></aside>
            <div class="gutter"><svg><use href="#tril" /></svg></div>
            <div class="page-area"><div class="marks"><i></i><i></i><i></i></div><div class="marks low"><i></i><i></i><i></i></div></div>
            <div class="s-scroll">
              <svg><use href="#up" /></svg><div class="s-thumb"><svg class="cursor"><use href="#cursor" /></svg></div><svg><use href="#down" /></svg>
            </div>
            <div class="gutter right"><svg><use href="#trir" /></svg></div>
            <aside class="panel">
              <div class="p-search"><input type="text" aria-label="Search tools" placeholder="Search 'Crop Page'" /></div>
              <div class="p-middle">
                <div class="p-list">
                  <div class="p-head"><svg class="teal"><use href="#export" /></svg><span>Export PDF</span><svg class="caret"><use href="#upbold" /></svg></div>
                  <div class="p-export">
                    <div class="p-name">Adobe Export PDF<svg><use href="#globe" /></svg></div>
                    <p>Convert PDF Files to Word<br />or Excel Online</p>
                    <a href="#">Select PDF File</a>
                    <button class="p-file">Specialism ...ion v0.2.pdf<svg><use href="#close" /></svg></button>
                    <label for="fmt">Convert to</label>
                    <div class="p-select"><select id="fmt"><option>Microsoft Word (*.docx)</option></select><svg><use href="#down" /></svg></div>
                    <div class="p-lang">Document Language:<br />English (U.S.) &nbsp;<a href="#">Change</a></div>
                    <button class="convert">Convert</button>
                  </div>
                  <div v-for="t in tools" :key="t.name" class="p-tool"><svg :style="{ color: t.color }"><use :href="'#' + t.icon" /></svg><span>{{ t.name }}</span><svg v-if="t.more" class="caret"><use href="#downbold" /></svg></div>
                </div>
                <div class="p-bar"><svg><use href="#up" /></svg><i></i><svg><use href="#down" /></svg></div>
              </div>
              <div class="p-promo"><b>Create, edit and sign PDF<br />forms &amp; agreements</b><a href="#">Start Free Trial</a></div>
            </aside>
          </div>
        </div>
        <span class="presenter">Redhead-Davis, Lamarr</span>
      </div>

      <div class="strip">
        <div v-for="p in people" :key="p.initials" class="tile" :class="{ live: p.live, self: p.self }">
          <span class="halo"><span class="face" :style="{ background: p.bg, color: p.fg }">{{ p.initials }}</span></span>
          <span v-if="p.name" class="who">{{ p.name }}<svg v-if="p.muted"><use href="#micoff" /></svg></span>
        </div>
      </div>

      <footer class="taskbar">
        <button class="t-start" aria-label="Start"><svg><use href="#start" /></svg></button>
        <label class="t-search"><svg><use href="#search" /></svg><input type="text" aria-label="Search Windows" placeholder="Type here to search" /></label>
        <button class="t-sys" aria-label="Cortana"><svg><use href="#cortana" /></svg></button>
        <button class="t-sys" aria-label="Task view"><svg><use href="#taskview" /></svg></button>
        <div class="t-apps">
          <button v-for="a in apps" :key="a.icon" class="t-app" :class="{ running: a.running, active: a.active, stacked: a.stacked }" :aria-label="a.icon"><svg><use :href="'#' + a.icon" /></svg><i v-if="a.icon === 'teams'" class="rec"></i><span v-if="a.icon === 'mysql'" class="cmd">MySQL</span></button>
        </div>
        <div class="tray">
          <svg class="q"><use href="#helpinfo" /></svg><svg><use href="#up" /></svg><svg><use href="#battery" /></svg><svg><use href="#sound" /></svg>
          <div class="clock">12:01<br />01/06/2021</div>
          <span class="notif"><svg><use href="#notif" /></svg><i>1</i></span>
        </div>
      </footer>
    </section>

    <!-- Secondary monitor: browser -->
    <section class="secondary">
      <div class="tabstrip">
        <div v-for="t in tabs" :key="t.title" class="tab" :class="{ active: t.active, long: t.long }">
          <svg class="fav"><use :href="t.active ? '#jiratab' : '#' + t.icon" /></svg><span>{{ t.title }}</span><svg class="x"><use href="#cross" /></svg>
        </div>
        <button class="newtab" aria-label="New tab"><svg><use href="#plus" /></svg></button>
        <div class="bwin"><svg class="media"><use href="#media" /></svg><svg><use href="#min" /></svg><svg><use href="#restore" /></svg><svg><use href="#close" /></svg></div>
      </div>
      <div class="address">
        <svg><use href="#back" /></svg><svg class="off"><use href="#fwd" /></svg><svg><use href="#reload" /></svg>
        <div class="omni"><svg><use href="#lock" /></svg><span class="url"><b>team-1616578727154.atlassian.net</b>/jira/software/projects/QAC/boards/6/backlog?atlOrigin=eyJpIjoiOWZmNTQ4Nzg4ODJlNDhkOGI1ZDFiYjk0ODQ...</span><svg class="st"><use href="#star" /></svg></div>
        <svg><use href="#adblock" /></svg><span class="se">Se</span><svg><use href="#react" /></svg><svg><use href="#puzzle" /></svg>
        <button class="paused"><i>Z</i>Paused</button>
        <svg class="vd"><use href="#vdots" /></svg>
      </div>
      <div class="bookmarks">
        <a href="#"><svg><use href="#appsgrid" /></svg>Apps</a>
        <a href="#"><svg><use href="#world" /></svg>Recent device strea...</a>
        <a href="#"><svg><use href="#folder" /></svg>Work things</a>
        <a href="#"><svg><use href="#folder" /></svg>Coding pages</a>
        <a href="#" class="rl"><svg><use href="#reading" /></svg>Reading list</a>
      </div>

      <div class="jira">
        <header class="jnav">
          <svg class="grid"><use href="#ninegrid" /></svg>
          <svg class="logo"><use href="#jira" /></svg><span class="brand">Jira Software</span>
          <nav><a v-for="n in nav" :key="n" href="#" :class="{ on: n === 'Projects' }">{{ n }}<svg><use href="#chev" /></svg></a></nav>
          <button class="create">Create</button>
          <label class="jsearch"><svg><use href="#lens" /></svg><input type="text" aria-label="Search Jira" placeholder="Search" /></label>
          <div class="jicons"><svg><use href="#news" /></svg><svg><use href="#helpfill" /></svg><svg><use href="#gear" /></svg><span class="av small">ZJ</span></div>
        </header>
        <div class="jbody">
          <aside class="side"><button aria-label="Expand sidebar"><svg><use href="#chevr" /></svg></button></aside>
          <main class="board">
            <div class="crumbs"><a href="#">Projects</a><span>/</span><a href="#">QA Cinema Project</a></div>
            <h2>Backlog</h2>
            <div class="filters">
              <label class="fbox"><input type="text" aria-label="Search backlog" /><svg><use href="#lens" /></svg></label>
              <span class="av">ZJ</span><span class="av add"><svg><use href="#addperson" /></svg></span>
              <button class="fepic">Epic <i>1</i><svg><use href="#chev" /></svg></button>
              <button class="fclear">Clear filters</button>
            </div>
            <div class="columns">
              <section class="left">
                <div class="epics">
                  <div class="ehead">Epic<svg><use href="#cross" /></svg></div>
                  <div class="ewrap">
                    <div class="ecol">
                      <div class="elist">
                        <div class="ecard none">Issues without epic</div>
                        <div v-for="e in epics" :key="e.name" class="ecard" :class="{ sel: e.selected }">
                          <div class="erow"><svg><use href="#chevr" /></svg><i :style="{ background: e.color }"></i>{{ e.name }}</div>
                          <div class="ebar"></div>
                        </div>
                      </div>
                      <button class="ecreate"><svg><use href="#plus" /></svg>Create Epic</button>
                    </div>
                    <div class="wbar ebarr"><svg><use href="#triup" /></svg><i></i><svg class="dk"><use href="#tri" /></svg></div>
                  </div>
                </div>
                <div class="backlog">
                  <div class="bhead">
                    <svg><use href="#chev" /></svg><b>Backlog</b><span>(6 of 23 issues visible)</span>
                    <div class="counts"><i>0</i><i class="b">0</i><i class="g">0</i></div>
                    <button>Create sprint</button>
                  </div>
                  <ul class="issues">
                    <li v-for="s in issues" :key="s.key" :class="{ sel: s.selected }">
                      <svg class="story"><use href="#story" /></svg><a href="#">{{ s.key }}</a><span class="sum">{{ s.summary }}</span><em>SITE NAVIGATION</em><svg class="pic"><use href="#person" /></svg>
                    </li>
                  </ul>
                  <button class="cissue"><svg><use href="#plus" /></svg>Create issue</button>
                </div>
              </section>
              <div class="wbar mbar"><svg><use href="#triup" /></svg><svg><use href="#tri" /></svg></div>
              <aside class="detail">
                <div class="dhead">
                  <div class="dpath"><span><svg><use href="#epic" /></svg>Site Navigation<em>/</em></span><span><svg><use href="#story" /></svg>QAC-11</span></div>
                  <div class="dacts"><svg class="lk"><use href="#unlock" /></svg><svg><use href="#eye" /></svg><span>1</span><svg><use href="#thumb" /></svg><svg><use href="#nodes" /></svg><svg><use href="#dots" /></svg><svg><use href="#close" /></svg></div>
                </div>
                <div class="dscroll">
                  <button class="status">To Do <svg><use href="#chev" /></svg></button>
                  <h3>Description</h3>
                  <p class="desc">Given the user is on any page, when they click on<br />‘Opening Times’ on the navbar, then the body of the<br />page will re-render to show the ‘Opening Times’ page</p>
                  <div class="pinned">
                    <div class="ptitle">YOUR PINNED FIELDS<svg><use href="#cross" /></svg></div>
                    <p>Click on the <svg><use href="#pin" /></svg> next to a field label to start pinning.</p>
                  </div>
                  <div class="assignee"><b>Assignee</b><svg><use href="#person" /></svg><span>Unassigned</span></div>
                </div>
                <div class="comment"><span class="av">ZJ</span><input type="text" aria-label="Add a comment" placeholder="Add a comment..." /></div>
                <p class="tip"><b>Pro tip:</b> press <kbd>M</kbd> to comment</p>
              </aside>
              <div class="wbar dbar"><svg class="dk"><use href="#triup" /></svg><i></i><svg class="dk"><use href="#tri" /></svg></div>
            </div>
          </main>
        </div>
      </div>

      <footer class="taskbar mini">
        <button class="t-sys" aria-label="Start"><svg><use href="#start" /></svg></button>
        <button class="t-sys" aria-label="Search"><svg><use href="#search" /></svg></button>
        <button class="t-sys" aria-label="Cortana"><svg><use href="#cortana" /></svg></button>
        <button class="t-sys" aria-label="Task view"><svg><use href="#taskview" /></svg></button>
        <div class="t-apps">
          <button v-for="a in apps" :key="a.icon" class="t-app" :class="{ running: a.running, active: a.active, stacked: a.stacked }" :aria-label="a.icon"><svg><use :href="'#' + a.icon" /></svg><i v-if="a.icon === 'teams'" class="rec"></i><span v-if="a.icon === 'mysql'" class="cmd">MySQL</span></button>
        </div>
        <div class="clock">12:01<br />01/06/2021</div>
      </footer>
    </section>
  </div>
</template>

<style>
body { background: #000; }
</style>

<style scoped>
* { box-sizing: border-box; }
.sprite { position: absolute; width: 0; height: 0; }
.desktop { display: grid; grid-template-columns: 24fr 17fr; min-height: 100vh; background: #000; color: #fff; font-family: "Open Sans", "Noto Sans", sans-serif; line-height: 1; }
svg { width: 16px; height: 16px; flex: none; display: block; }
button { border: 0; background: none; padding: 0; color: inherit; font: inherit; display: flex; align-items: center; justify-content: center; }
input, select { border: 0; background: none; padding: 0; color: inherit; font: inherit; outline: 0; min-width: 0; }
a { color: inherit; text-decoration: none; }
i, em { font-style: normal; }
h1, h2, h3, p, ul { margin: 0; padding: 0; font-weight: 400; }
.primary { display: flex; flex-direction: column; min-width: 0; height: 100vh; background: #1a1a1a; }
.secondary { display: flex; flex-direction: column; min-width: 0; color: #42526e; }

/* Call window chrome */
.titlebar { height: 51px; border-top: 2px solid #000; border-bottom: 1px solid #000; background: #0a0a0a; display: grid; grid-template-columns: 1fr auto 1fr; align-items: center; color: #6d6d6d; }
.title { grid-column: 2; font-size: 17px; line-height: 24px; padding-top: 4px; }
.winbtns { display: flex; justify-content: flex-end; }
.winbtns button { width: 50px; height: 48px; }
.winbtns svg { width: 17px; height: 17px; }
.callbar { height: 75px; background: #1f1f1f; display: flex; align-items: center; padding: 0 27px 0 36px; }
.timer { font-size: 16px; color: #d6d6d6; }
.request { margin-left: auto; width: 177px; height: 40px; border: 1px solid #605e5c; border-radius: 3px; background: #292828; font-size: 16px; font-weight: 600; }
.group { display: flex; height: 40px; margin-left: 42px; padding-left: 15px; border-left: 1px solid #5a5a5a; color: #d8d8d8; }
.group button { width: 60px; }
.group svg { width: 25px; height: 25px; }
.group + .group { margin-left: 16px; }
.group.devices { color: #fff; }
.leave { margin-left: 15px; width: 131px; height: 40px; border-radius: 3px; background: #c4314b; font-size: 16px; font-weight: 600; gap: 10px; }
.leave svg { width: 25px; height: 13px; }
.stage { flex: 1; min-height: 0; margin: 4px 5px 3px; background: #000; display: flex; position: relative; }
.presenter { position: absolute; left: 17px; bottom: 14px; font-size: 14px; line-height: 20px; }

/* Shared screen */
.shared { flex: 1; min-width: 0; margin: 0 263px; display: flex; flex-direction: column; background: #4d4d4f; color: #e2e2e2; font-size: 10px; }
.s-taskbar { height: 22px; display: flex; background: linear-gradient(90deg, #06093d, #0d1f5a 25%, #060b45 35%, #0b1a58 55%, #040a42 68%, #0d1f5c 75%, #0b1b55); color: #fff; }
.s-app { width: 27px; display: flex; align-items: center; justify-content: center; }
.s-app svg { width: 12px; height: 12px; }
.s-app.open { border-top: 2px solid #9fb0e6; padding-bottom: 2px; border-left: 3px solid transparent; border-right: 3px solid transparent; }
.s-app.front { background: #24389a; border-color: #9fb0e6 transparent transparent; }
.s-tray { margin-left: auto; display: flex; align-items: center; gap: 5px; padding-right: 18px; font-size: 9px; }
.s-tray svg { width: 12px; height: 12px; }
.s-tray .blue { color: #1b8ae0; }
.s-time { padding: 0 8px 0 2px; }
.s-title { height: 16px; background: #1b2460; display: flex; align-items: center; gap: 6px; padding: 0 13px 0 3px; white-space: nowrap; }
.s-title svg { width: 9px; height: 9px; }
.s-title > svg { width: 8px; height: 12px; }
.s-win { margin-left: auto; display: flex; gap: 24px; }
.s-menu { height: 16px; background: #3d3b3c; display: flex; gap: 10px; align-items: center; padding-left: 5px; font-size: 9px; }
.s-tabs { height: 25px; background: #424242; border-bottom: 1px solid #383838; display: flex; align-items: center; font-size: 11px; color: #bdbdbd; }
.s-home { padding-left: 12px; width: 63px; }
.s-tools { width: 47px; }
.s-tab { width: 128px; height: 25px; padding-left: 15px; background: #4d4d4f; display: flex; align-items: center; gap: 8px; font-size: 9px; color: #e2e2e2; white-space: nowrap; }
.s-tab svg { width: 7px; height: 7px; }
.s-account { margin-left: auto; display: flex; align-items: center; gap: 14px; padding-right: 18px; color: #eee; }
.s-account svg { width: 15px; height: 15px; }
.s-account b { font-weight: 600; padding-left: 6px; }
.dim { opacity: .5; }
.s-toolbar { height: 34px; border-bottom: 1px solid #3f3f3f; display: flex; align-items: center; padding: 0 11px; gap: 16px; color: #c8c8c8; font-size: 9px; }
.s-toolbar svg { width: 16px; height: 16px; }
.s-mid { margin: 0 auto 0 250px; display: flex; align-items: center; gap: 16px; }
.s-toolbar .xs { width: 7px; height: 7px; }
.s-field { border-bottom: 1px solid #777; height: 20px; display: flex; align-items: center; justify-content: center; }
.page { width: 20px; }
.of { width: 18px; margin-left: -12px; white-space: nowrap; }
.zoom { width: 44px; gap: 10px; }
.fit { display: flex; align-items: center; gap: 4px; }
.hot { color: #4a9df0; }
.bar { width: 1px; height: 20px; margin: 0 -3px; background: #3c3c3c; }
.s-end { display: flex; gap: 16px; }
.s-body { flex: 1; min-height: 0; display: flex; }
.s-rail { width: 32px; display: flex; flex-direction: column; align-items: center; gap: 17px; padding-top: 16px; color: #c8c8c8; }
.gutter { width: 13px; background: #434343; display: flex; align-items: center; justify-content: center; color: #d0d0d0; }
.gutter svg { width: 7px; height: 9px; }
.gutter.right { width: 14px; }
.page-area { flex: 1; background: #fff; }
.marks { display: flex; padding-left: 506px; border-top: 1px solid #aaa; }
.marks i { width: 3px; height: 1px; background: #444; margin-right: 47px; }
.marks i + i { margin-right: 19px; }
.marks.low { border: 0; margin-top: 53px; }
.s-scroll { width: 13px; background: #191919; display: flex; flex-direction: column; align-items: center; justify-content: space-between; padding: 4px 0; color: #9a9a9a; }
.s-scroll > svg { width: 8px; height: 8px; }
.s-thumb { width: 12px; height: 26px; background: #a6a6a6; margin-bottom: 180px; position: relative; }
.cursor { position: absolute; left: 5px; top: 5px; width: 10px; height: 15px; }
.panel { width: 166px; display: flex; flex-direction: column; background: #4d4d4f; border-left: 1px solid #3c3c3c; font-size: 11px; }
.p-search { padding: 11px 11px; height: 47px; }
.p-search input { width: 100%; height: 25px; border: 1px solid #656565; padding-left: 9px; background: #484848; font-size: 9px; }
.p-search input::placeholder { color: #bdbdbd; opacity: 1; }
.p-middle { flex: 1; min-height: 0; display: flex; overflow: hidden; }
.p-list { flex: 1; min-width: 0; overflow: hidden; }
.p-head, .p-tool { height: 33px; display: flex; align-items: center; padding-left: 18px; gap: 8px; }
.p-head { height: 29px; }
.p-head span, .p-tool span { flex: 1; white-space: nowrap; }
.caret { width: 10px; height: 10px; margin-right: 16px; }
.teal { color: #2ab3c4; }
.p-export { height: 296px; background: #323232; background-clip: content-box; box-shadow: inset 0 0 0 200px #323232; padding: 15px 10px 0; font-size: 9px; line-height: 12px; margin-bottom: -1px; display: flex; flex-direction: column; align-items: flex-start; color: #eee; }
.p-export a { color: #62b8ea; }
.p-name { font: 700 11px/14px "Liberation Sans", sans-serif; width: 100%; display: flex; justify-content: space-between; padding-right: 1px; margin-bottom: 6px; white-space: nowrap; }
.p-name svg { width: 12px; height: 12px; }
.p-export p { margin-bottom: 15px; white-space: nowrap; }
.p-file { width: 132px; height: 22px; margin: 6px 0 14px; border: 1px solid #bbb; border-radius: 2px; justify-content: space-between; padding: 0 5px 0 7px; white-space: nowrap; }
.p-file svg { width: 9px; height: 9px; }
.p-export label { margin-bottom: 4px; }
.p-select { width: 134px; height: 22px; border: 1px solid #bbb; border-radius: 2px; padding: 0 8px 0 7px; display: flex; align-items: center; }
.p-select select { appearance: none; flex: 1; }
.p-select svg { width: 9px; height: 9px; }
.p-lang { line-height: 15px; margin-top: 10px; }
.convert { width: 132px; height: 23px; border-radius: 12px; background: #1f78ee; margin-top: 34px; font-size: 10px; }
.p-bar { width: 12px; background: #191919; display: flex; flex-direction: column; align-items: center; color: #999; padding: 3px 0; }
.p-bar svg { width: 7px; height: 7px; }
.p-bar i { width: 11px; height: 419px; margin: 2px 0 auto; background: #4d4d4f; }
.p-promo { height: 69px; text-align: center; padding-top: 15px; font-size: 9px; line-height: 12px; border-top: 1px solid #444; }
.p-promo a { display: block; color: #62b8ea; margin-top: 5px; }

/* Participants */
.strip { display: flex; justify-content: flex-end; height: 118px; }
.tile { width: 225px; background: #3b3a39; display: flex; align-items: center; justify-content: center; position: relative; }
.tile.live { background: radial-gradient(circle at 50% 50%, #5b598f 0, #4a4970 32%, #35344c 75%); }
.tile.self { width: 226px; background: #1f1f1f; }
.halo { width: 78px; height: 78px; border-radius: 50%; display: flex; align-items: center; justify-content: center; }
.live .halo { border: 5px solid #9ea2ff; background: linear-gradient(#45436b, #2e2d40); }
.face { width: 55px; height: 55px; border-radius: 50%; font-size: 20px; font-weight: 600; display: flex; align-items: center; justify-content: center; }
.who { position: absolute; left: 18px; bottom: 5px; font-size: 14px; line-height: 20px; display: flex; align-items: center; gap: 12px; text-shadow: 0 1px 2px #000; white-space: nowrap; }

/* Windows taskbar */
.taskbar { height: 50px; flex: none; display: flex; color: #000; background: linear-gradient(90deg, #efd8e0 0, #ead3da 27%, #f2dfd5 38%, #f2dbd3 65%, #e6d2d8 75%, #cfe4e8 80%, #cbecec 92%, #d5e6f2 100%); }
.t-start { width: 61px; }
.t-start svg { width: 22px; height: 22px; }
.t-search { width: 429px; border: 1px solid #c0c0c0; background: #fff; display: flex; align-items: center; gap: 14px; padding-left: 12px; font-size: 18px; }
.t-search svg { width: 22px; height: 22px; }
.t-search input { flex: 1; }
.t-search input::placeholder { color: #333; opacity: 1; }
.t-sys { width: 60px; }
.t-sys svg { width: 23px; height: 23px; }
.t-apps { display: flex; margin-left: 2px; }
.t-app { width: 62px; position: relative; }
.t-app svg { width: 29px; height: 29px; }
.t-app.active { background: rgba(255, 255, 255, .6); }
.t-app.running::after { content: ""; position: absolute; left: 6px; right: 5px; bottom: 0; height: 3px; background: #0a78d6; }
.t-app.active::after { left: 0; right: 0; }
.t-app.stacked::after { background: linear-gradient(90deg, #0a78d6 80%, #5ba6e4 80%); }
.cmd { position: absolute; left: 0; right: 0; top: 20px; text-align: center; color: #fff; font: 7px/8px "Liberation Mono", monospace; }
.rec { position: absolute; right: 14px; bottom: 9px; width: 13px; height: 13px; border-radius: 50%; background: #c50f2f; border: 1px solid #fff; }
.tray { margin-left: auto; display: flex; align-items: center; padding-right: 24px; gap: 11px; }
.tray svg { width: 18px; height: 18px; }
.tray .q { width: 25px; height: 25px; }
.clock { font-size: 14px; line-height: 23px; text-align: center; align-self: center; }
.tray .clock { width: 90px; }
.notif { position: relative; padding-left: 10px; }
.notif svg { width: 21px; height: 21px; }
.notif i { position: absolute; left: 19px; top: 10px; width: 20px; height: 20px; border-radius: 50%; border: 1px solid #777; background: #d2d6d8; font-size: 12px; line-height: 18px; text-align: center; }
.mini { height: 40px; }
.mini .t-sys { width: 48px; }
.mini .t-sys svg { width: 18px; height: 18px; }
.mini .t-apps { margin-left: 1px; }
.mini .t-app { width: 49px; }
.mini .t-app svg { width: 24px; height: 24px; }
.mini .t-app.running::after { height: 2px; left: 4px; }
.mini .cmd { top: 15px; font-size: 6px; }
.mini .rec { right: 10px; bottom: 6px; width: 10px; height: 10px; }
.mini .clock { margin-left: auto; padding-right: 7px; font-size: 12px; line-height: 18px; }

/* Browser */
.tabstrip { height: 34px; background: #000; color: #fff; display: flex; font-size: 12px; padding-left: 9px; }
.tab { width: 218px; display: flex; align-items: center; padding: 0 9px 0 10px; gap: 8px; }
.tab span { flex: 1; min-width: 0; white-space: nowrap; line-height: 20px; }
.tab.long span { mask-image: linear-gradient(90deg, #000 84%, rgba(0, 0, 0, .35)); }
.tab.active { background: #353535; border-radius: 8px 8px 0 0; }
.tab .x { width: 11px; height: 11px; }
.tab:nth-child(n+3) { background: linear-gradient(#555, #555) right center / 1px 20px no-repeat; }
.newtab { width: 44px; }
.newtab svg { width: 13px; height: 13px; }
.bwin { margin-left: auto; display: flex; align-items: center; gap: 34px; padding-right: 17px; }
.bwin svg { width: 12px; height: 12px; }
.bwin .media { width: 15px; height: 15px; margin-right: -4px; }
.address { height: 36px; background: #353535; color: #fff; display: flex; align-items: center; gap: 16px; padding: 0 14px; }
.address .off { opacity: .5; }
.se { width: 16px; height: 16px; background: #5a5a5a; color: #8a8a8a; font: 700 9px/19px "Liberation Sans", sans-serif; padding-left: 2px; }
.omni { flex: 1; min-width: 0; height: 28px; border-radius: 14px; background: #202124; display: flex; align-items: center; gap: 9px; padding: 0 10px; margin: 0 -2px; font-size: 13px; }
.omni > svg:first-child { width: 14px; height: 14px; }
.url { flex: 1; min-width: 0; white-space: nowrap; line-height: 20px; color: #9aa0a6; }
.url b { font-weight: 400; color: #fff; }
.paused { width: 81px; height: 28px; border: 1px solid #8ab4f8; border-radius: 14px; color: #8ab4f8; font-size: 11px; gap: 8px; margin-left: -6px; margin-right: -6px; }
.paused i { width: 22px; height: 22px; border-radius: 50%; background: #00897b; color: #fff; font-size: 9px; line-height: 22px; }
.bookmarks { height: 33px; background: #353535; border-bottom: 1px solid #222; color: #fff; display: flex; align-items: center; gap: 18px; padding: 0 14px; font-size: 11px; }
.bookmarks a { display: flex; align-items: center; gap: 8px; line-height: 18px; }
.bookmarks svg { width: 15px; height: 15px; }
.bookmarks .rl { margin-left: auto; border-left: 1px solid #666; padding-left: 12px; }

/* Jira */
.jira { height: 625px; background: #fff; display: flex; flex-direction: column; font-size: 13px; }
.jnav { height: 57px; flex: none; border-bottom: 1px solid #dcdfe4; box-shadow: 0 1px 3px #e6e8ec; display: flex; align-items: center; padding: 0 24px 0 22px; color: #42526e; }
.grid { color: #344563; }
.logo { width: 18px; height: 18px; margin-left: 13px; }
.brand { font-size: 17px; font-weight: 500; margin-left: 6px; width: 112px; color: #253858; white-space: nowrap; }
.jnav nav { display: flex; height: 56px; margin-left: 19px; }
.jnav nav a { display: flex; align-items: center; gap: 3px; padding: 0 4px; margin: 0 7px; font-weight: 500; white-space: nowrap; border-bottom: 3px solid transparent; border-top: 3px solid transparent; }
.jnav nav svg { width: 9px; height: 9px; opacity: .6; }
.jnav nav .on { color: #0052cc; border-bottom-color: #0052cc; }
.create { width: 65px; height: 32px; margin-left: 16px; border-radius: 3px; background: #0052cc; color: #fff; font-weight: 600; }
.jsearch { margin-left: auto; width: 200px; height: 32px; border: 2px solid #dfe1e6; border-radius: 5px; display: flex; align-items: center; gap: 9px; padding-left: 7px; font: 14px "Liberation Sans", sans-serif; }
.jsearch svg { width: 14px; height: 14px; }
.jsearch input { width: 150px; }
.jsearch input::placeholder { color: #6b778c; opacity: 1; }
.jicons { display: flex; align-items: center; gap: 20px; margin-left: 12px; color: #344563; }
.jicons svg { width: 20px; height: 20px; }
.av { width: 32px; height: 32px; flex: none; border-radius: 50%; background: #00a3bf; color: #172b4d; font-size: 12px; font-weight: 600; display: flex; align-items: center; justify-content: center; }
.av.small { width: 24px; height: 24px; font-size: 10px; }
.av.add { background: #dfe1e6; color: #7a869a; margin-left: 10px; }
.av.add svg { width: 20px; height: 20px; }
.jbody { flex: 1; min-height: 0; display: flex; }
.side { width: 22px; border-right: 1px solid #dfe1e6; position: relative; }
.side button { position: absolute; left: 8px; top: 31px; width: 24px; height: 24px; border-radius: 50%; background: #fff; box-shadow: 0 1px 4px #b8bfca; }
.side svg { width: 10px; height: 10px; }
.board { flex: 1; min-width: 0; display: flex; flex-direction: column; padding-left: 31px; }
.crumbs { display: flex; gap: 10px; margin-top: 25px; line-height: 20px; color: #6b778c; }
.board h2 { font-size: 22px; line-height: 28px; font-weight: 500; color: #172b4d; margin: 6px 0 16px; }
.filters { display: flex; align-items: center; color: #42526e; height: 40px; font-weight: 500; }
.fbox { width: 118px; height: 40px; border: 2px solid #dfe1e6; border-radius: 3px; background: #fafbfc; display: flex; align-items: center; padding-right: 11px; margin-right: 17px; }
.fbox input { flex: 1; }
.fbox svg { width: 14px; height: 14px; }
.fepic { margin-left: 24px; gap: 4px; }
.fepic i { width: 18px; height: 16px; border-radius: 8px; background: #0052cc; color: #fff; font-size: 12px; line-height: 16px; font-weight: 400; }
.fepic svg { width: 10px; height: 10px; margin-left: 7px; }
.fclear { margin-left: 41px; }
.columns { flex: 1; min-height: 0; display: flex; margin-top: 16px; }
.left { flex: 1; min-width: 0; display: flex; gap: 20px; padding-top: 8px; padding-right: 40px; }
.epics { width: 270px; height: 393px; background: #f4f5f7; border-radius: 6px; display: flex; flex-direction: column; margin-left: -1px; }
.ehead { height: 40px; display: flex; align-items: center; justify-content: space-between; padding: 0 15px 0 16px; font-weight: 500; }
.ehead svg { width: 11px; height: 11px; }
.ewrap { flex: 1; min-height: 0; display: flex; justify-content: space-between; }
.ecol { width: 249px; padding-left: 4px; display: flex; flex-direction: column; }
.elist { height: 307px; overflow: hidden; padding-top: 2px; }
.ecard { height: 54px; background: #fff; border-radius: 3px; box-shadow: 0 1px 1px #b9c0cb; margin-bottom: 4px; padding: 14px 14px 0; font-weight: 600; color: #5e6c84; }
.ecard.none { height: 42px; padding: 14px 12px; line-height: 16px; font-weight: 500; }
.ecard.sel { background: #344563; color: #e4e8ee; }
.erow { display: flex; align-items: center; height: 16px; }
.erow svg { width: 9px; height: 9px; margin: 0 8px 0 -2px; color: #42526e; }
.sel .erow svg { color: #ccd2dc; }
.erow i { width: 16px; height: 16px; border-radius: 3px; margin-right: 7px; }
.ebar { height: 4px; border-radius: 2px; background: #e9eaef; margin-top: 8px; }
.ecreate { height: 36px; margin-top: 4px; background: #e9ebee; border-radius: 3px; gap: 7px; font-weight: 500; }
.ecreate svg, .cissue svg { width: 12px; height: 12px; }
.wbar { width: 17px; flex: none; background: #f1f1f1; display: flex; flex-direction: column; align-items: center; justify-content: space-between; padding: 4px 0; color: #a3a3a3; }
.wbar svg { width: 9px; height: 9px; }
.wbar .dk { color: #505050; }
.wbar i { width: 13px; background: #c1c1c1; }
.ebarr { height: 351px; }
.ebarr i { height: 293px; margin: 4px 0 auto; }
.backlog { flex: 1; min-width: 0; padding-top: 8px; }
.bhead { height: 32px; display: flex; align-items: center; padding-left: 9px; white-space: nowrap; }
.bhead svg { width: 10px; height: 10px; margin-right: 7px; color: #253858; }
.bhead b { font-weight: 600; color: #172b4d; margin-right: 8px; }
.bhead span { color: #6b778c; }
.counts { display: flex; gap: 4px; margin-left: auto; }
.counts i { width: 19px; height: 16px; border-radius: 8px; background: #dfe1e6; font-size: 12px; line-height: 16px; text-align: center; }
.counts .b { background: #0052cc; color: #fff; }
.counts .g { background: #00875a; color: #fff; }
.bhead button { width: 105px; height: 32px; background: #f4f5f7; border-radius: 3px; margin-left: 8px; font-weight: 500; }
.issues { list-style: none; margin-top: 7px; border: 1px solid #e4e6ea; }
.issues li { height: 40px; display: flex; align-items: center; padding: 0 54px 0 16px; border-bottom: 1px solid #e4e6ea; white-space: nowrap; }
.issues li:last-child { border-bottom: 0; }
.issues li.sel { background: #deebff; }
.story { width: 14px; height: 14px; margin-right: 9px; }
.issues a { color: #6b778c; margin-right: 10px; }
.sum { flex: 1; min-width: 0; line-height: 20px; color: #253858; }
.issues em { height: 21px; width: 101px; flex: none; border-radius: 3px; background: #eae6ff; color: #403294; font-size: 11px; line-height: 21px; text-align: center; font-weight: 600; margin-right: 10px; }
.pic { width: 24px; height: 24px; }
.cissue { margin: 12px 0 0 14px; gap: 6px; font-weight: 500; }

/* Issue detail */
.detail { flex: 1; max-width: 423px; padding-left: 22px; display: flex; flex-direction: column; color: #172b4d; }
.dhead { height: 49px; display: flex; justify-content: space-between; margin-right: 20px; border-bottom: 2px solid #e4e6ea; }
.dpath { padding-left: 9px; font-size: 12px; color: #6b778c; }
.dpath span { display: flex; align-items: center; height: 21px; gap: 5px; white-space: nowrap; }
.dpath em { padding-left: 5px; }
.dpath svg { width: 14px; height: 14px; }
.dacts { display: flex; align-items: center; height: 43px; color: #42526e; margin-right: -12px; gap: 14px; font-size: 12px; }
.dacts svg { width: 19px; height: 19px; }
.dacts .lk { margin-right: 7px; }
.dacts span { margin-left: -8px; }
.dscroll { height: 270px; overflow: hidden; margin: 0 8px 0 -4px; padding-left: 4px; }
.status { width: 89px; height: 32px; margin: -16px 0 0 8px; background: #dfe1e6; border-radius: 3px; font-weight: 600; gap: 12px; }
.status svg { width: 10px; height: 10px; }
.detail h3 { font-size: 13px; line-height: 20px; font-weight: 600; padding: 26px 0 2px 8px; }
.desc { background: #ebecf0; border-radius: 3px; margin-right: 20px; padding: 2px 8px; line-height: 23px; white-space: nowrap; height: 73px; }
.pinned { background: #eae6ff; border-radius: 3px; margin: 16px 0 0 -4px; height: 80px; padding: 13px 20px 0 12px; color: #403294; }
.ptitle { display: flex; justify-content: space-between; font-size: 11px; line-height: 16px; height: 32px; font-weight: 500; }
.ptitle svg { width: 11px; height: 11px; }
.pinned p { display: flex; align-items: center; gap: 5px; line-height: 20px; white-space: nowrap; }
.pinned p svg { width: 13px; height: 13px; }
.assignee { display: flex; align-items: center; margin: 16px 12px 0 8px; height: 24px; line-height: 24px; }
.assignee b { width: 126px; font-size: 11px; font-weight: 500; }
.assignee svg { width: 24px; height: 24px; margin-right: 10px; }
.comment { display: flex; align-items: center; justify-content: space-between; border-top: 2px solid #e4e6ea; margin: 0 20px 0 8px; padding: 16px 0 0 2px; }
.comment input { width: 325px; height: 40px; border: 1px solid #dfe1e6; border-radius: 3px; padding-left: 20px; }
.comment input::placeholder { color: #7a869a; opacity: 1; }
.tip { margin: 8px 0 0 56px; font-size: 12px; line-height: 18px; color: #6b778c; }
.tip b { font-weight: 600; }
.tip kbd { display: inline-block; background: #dfe1e6; border-radius: 3px; font: 700 11px/16px "Open Sans", sans-serif; padding: 0 3px; color: #42526e; margin: 0 1px; }
.dbar i { height: 161px; margin-bottom: 68px; }
</style>
